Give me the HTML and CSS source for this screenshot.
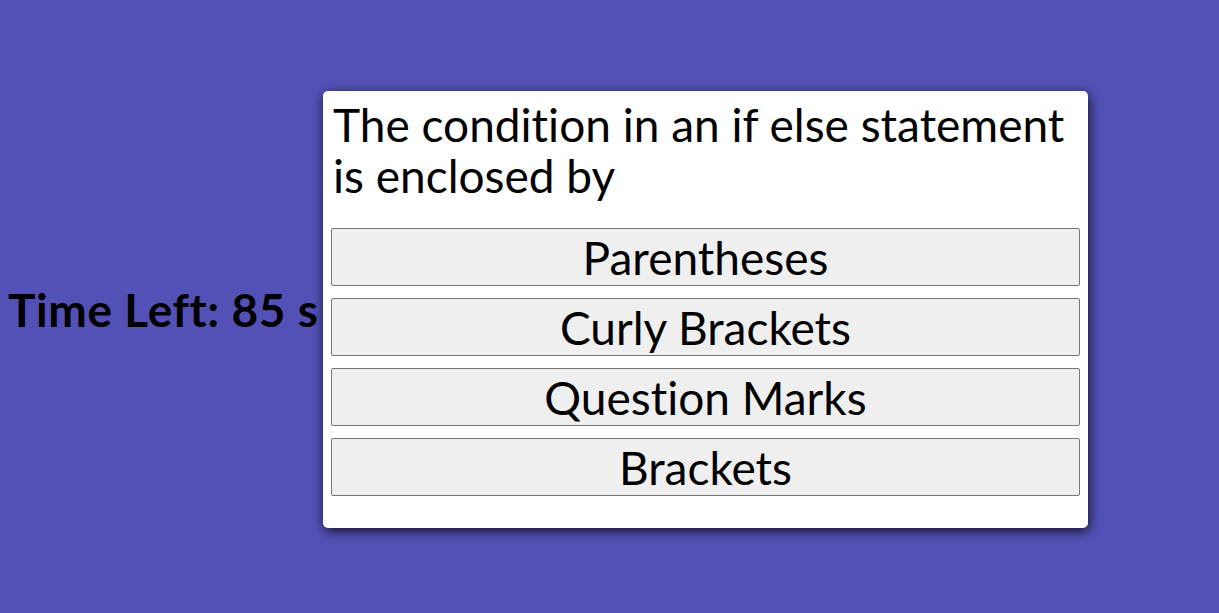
FILE: index.html
```html
<!DOCTYPE html>
<html>
<head>
<meta charset="utf-8">
<link rel="stylesheet" href="styles.css">
</head>
<body>
<div class="page">
  <div class="timer">Time Left: 85 s</div>
  <div class="card">
    <div class="question">The condition in an if else statement is enclosed by</div>
    <div class="answers">
      <button class="answer">Parentheses</button>
      <button class="answer">Curly Brackets</button>
      <button class="answer">Question Marks</button>
      <button class="answer">Brackets</button>
    </div>
  </div>
</div>
</body>
</html>
```

FILE: styles.css
```css
html, body {
  margin: 0;
  padding: 0;
  height: 100%;
}
body {
  background: #5351b6;
  font-family: "Lato", "DejaVu Sans", sans-serif;
  font-variant-ligatures: none;
  color: #000;
}
.page {
  display: flex;
  align-items: center;
  height: 613px;
  padding-left: 8px;
  padding-top: 6px;
  box-sizing: border-box;
}
.timer {
  width: 315px;
  flex: none;
  white-space: nowrap;
  font-weight: bold;
  font-size: 46px;
  letter-spacing: 0.6px;
  line-height: 51px;
}
.card {
  flex: none;
  width: 765px;
  box-sizing: border-box;
  background: #fff;
  border-radius: 5px;
  padding: 8px 8px 32px 8px;
  box-shadow: 1px 3px 12px rgba(0, 0, 0, 0.8);
}
.question {
  font-size: 46px;
  line-height: 51px;
  padding: 0 2px;
  margin-bottom: 27px;
}
.answers {
  display: flex;
  flex-direction: column;
  gap: 12px;
}
.answer {
  height: 58px;
  margin: 0;
  padding: 0;
  font-family: inherit;
  font-variant-ligatures: none;
  font-size: 46px;
  background: #efefef;
  border: 1px solid #767676;
  border-radius: 2px;
  color: #000;
}
```
